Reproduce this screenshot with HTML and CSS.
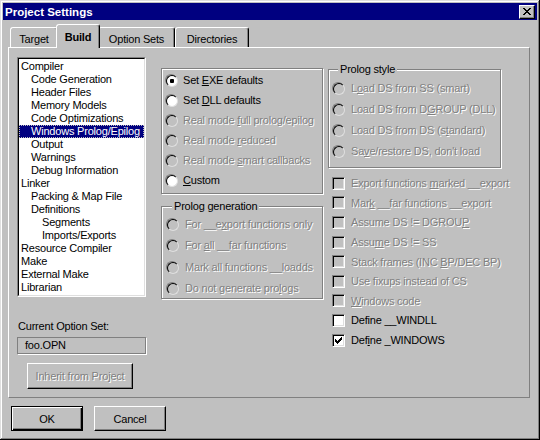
FILE: index.html
```html
<!DOCTYPE html>
<html>
<head>
<meta charset="utf-8">
<title>Project Settings</title>
<link rel="stylesheet" href="styles.css">
</head>
<body>
<div class="window">
  <div class="titlebar">
    <span class="title">Project Settings</span>
    <div class="close"><svg width="8" height="7" viewBox="0 0 8 7" shape-rendering="crispEdges"><path fill="#000" d="M0 0h2v1h-2z M6 0h2v1h-2z M1 1h2v1h-2z M5 1h2v1h-2z M2 2h4v1h-4z M3 3h2v1h-2z M2 4h4v1h-4z M1 5h2v1h-2z M5 5h2v1h-2z M0 6h2v1h-2z M6 6h2v1h-2z"/></svg></div>
  </div>
  <div class="client">
    <div class="tabs">
      <div class="tab t-target">Target</div>
      <div class="tab sel t-build">Build</div>
      <div class="tab t-opt">Option Sets</div>
      <div class="tab t-dir">Directories</div>
    </div>
    <div class="panel">
      <div class="col-left">
        <div class="listbox"><div class="listbox-in">
          <div class="item">Compiler</div>
          <div class="item l1">Code Generation</div>
          <div class="item l1">Header Files</div>
          <div class="item l1">Memory Models</div>
          <div class="item l1">Code Optimizations</div>
          <div class="item l1 selected">Windows Prolog/Epilog</div>
          <div class="item l1">Output</div>
          <div class="item l1">Warnings</div>
          <div class="item l1">Debug Information</div>
          <div class="item">Linker</div>
          <div class="item l1">Packing &amp; Map File</div>
          <div class="item l1">Definitions</div>
          <div class="item l2">Segments</div>
          <div class="item l2">Imports/Exports</div>
          <div class="item">Resource Compiler</div>
          <div class="item">Make</div>
          <div class="item">External Make</div>
          <div class="item">Librarian</div>
        </div></div>
        <div class="label">Current Option Set:</div>
        <div class="field">foo.OPN</div>
        <div class="btn inherit dis">Inherit from Project</div>
      </div>

      <div class="col-mid">
        <div class="group g1">
          <div class="opt"><span class="radio on"></span><span>Set <u>E</u>XE defaults</span></div>
          <div class="opt"><span class="radio"></span><span>Set <u>D</u>LL defaults</span></div>
          <div class="opt dis"><span class="radio"></span><span>Real mode <u>f</u>ull prolog/epilog</span></div>
          <div class="opt dis"><span class="radio"></span><span>Real mode <u>r</u>educed</span></div>
          <div class="opt dis"><span class="radio"></span><span>Real mode <u>s</u>mart callbacks</span></div>
          <div class="opt"><span class="radio"></span><span><u>C</u>ustom</span></div>
        </div>
        <div class="group g2">
          <span class="gtitle">Prolog generation</span>
          <div class="rows">
            <div class="opt dis"><span class="radio"></span><span>For __e<u>x</u>port functions only</span></div>
            <div class="opt dis"><span class="radio"></span><span>For <u>a</u>ll __far functions</span></div>
            <div class="opt dis"><span class="radio"></span><span>Mark all functions __loadds</span></div>
            <div class="opt dis"><span class="radio"></span><span>Do not generate pro<u>l</u>ogs</span></div>
          </div>
        </div>
      </div>

      <div class="col-right">
        <div class="group g3">
          <span class="gtitle">Prolog style</span>
          <div class="rows">
            <div class="opt dis"><span class="radio"></span><span>L<u>o</u>ad DS from SS (smart)</span></div>
            <div class="opt dis"><span class="radio"></span><span>Load DS from D<u>G</u>ROUP (DLL)</span></div>
            <div class="opt dis"><span class="radio"></span><span>Load DS from DS (s<u>t</u>andard)</span></div>
            <div class="opt dis"><span class="radio"></span><span>Sa<u>v</u>e/restore DS, don't load</span></div>
          </div>
        </div>
        <div class="checks">
          <div class="opt dis"><span class="check"></span><span>Export functions <u>m</u>arked __export</span></div>
          <div class="opt dis"><span class="check"></span><span>Mar<u>k</u> __far functions __export</span></div>
          <div class="opt dis"><span class="check"></span><span>Assume DS != DGROU<u>P</u></span></div>
          <div class="opt dis"><span class="check"></span><span>Assu<u>m</u>e DS != SS</span></div>
          <div class="opt dis"><span class="check"></span><span>Stack frames (INC <u>B</u>P/DEC BP)</span></div>
          <div class="opt dis"><span class="check"></span><span>Use fixups instead of CS</span></div>
          <div class="opt dis"><span class="check"></span><span><u>W</u>indows code</span></div>
          <div class="opt"><span class="check"></span><span>Define __WINDLL</span></div>
          <div class="opt"><span class="check"><svg width="7" height="7" viewBox="0 0 7 7" shape-rendering="crispEdges"><path fill="#000" d="M6 0h1v1h-1z M5 1h2v1h-2z M0 2h1v1h-1z M4 2h3v1h-3z M0 3h2v1h-2z M3 3h3v1h-3z M0 4h5v1h-5z M1 5h3v1h-3z M2 6h1v1h-1z"/></svg></span><span>Def<u>i</u>ne _WINDOWS</span></div>
        </div>
      </div>
    </div>
    <div class="buttons">
      <div class="btn default">OK</div>
      <div class="btn cancel">Cancel</div>
    </div>
  </div>
</div>
</body>
</html>
```

FILE: styles.css
```css
* { box-sizing: border-box; }
html, body { margin: 0; padding: 0; }
body {
  width: 540px;
  height: 440px;
  overflow: hidden;
  background: #c0c0c0;
  font-family: "Liberation Sans", Arial, sans-serif;
  font-size: 11px;
  letter-spacing: -0.2px;
  color: #000;
}
u { text-decoration: underline; text-underline-offset: 1px; }

.window {
  width: 540px;
  height: 440px;
  padding: 3px;
  background: #c0c0c0;
  box-shadow: inset -1px -1px #000, inset 1px 1px #dfdfdf, inset -2px -2px #808080, inset 2px 2px #fff;
  display: flex;
  flex-direction: column;
}

.titlebar {
  height: 17px;
  flex: none;
  background: #000080;
  display: flex;
  align-items: center;
  justify-content: space-between;
  padding: 0 2px 0 2px;
}
.title {
  color: #fff;
  font-weight: bold;
  font-size: 11.5px;
  letter-spacing: 0;
}
.close {
  width: 16px;
  height: 14px;
  background: #c0c0c0;
  border: 1px solid;
  border-color: #fff #000 #000 #fff;
  box-shadow: inset -1px -1px #808080;
  display: flex;
  align-items: center;
  justify-content: center;
  padding-right: 1px;
}
.close svg { display: block; }

.client {
  padding: 4px 0 0 5px;
  display: flex;
  flex-direction: column;
}

.tabs {
  height: 23px;
  margin-left: 2px;
  display: flex;
  align-items: flex-end;
  position: relative;
  z-index: 2;
}
.tab {
  height: 20px;
  background: #c0c0c0;
  border: 1px solid;
  border-bottom: 0;
  border-color: #fff #000 transparent #fff;
  border-radius: 3px 3px 0 0;
  box-shadow: inset -1px 0 #808080;
  display: flex;
  align-items: center;
  justify-content: center;
  padding-top: 2px;
}
.t-target { width: 48px; }
.t-build { width: 44px; }
.t-opt { width: 77px; }
.t-dir { width: 74px; }
.tab.sel {
  height: 24px;
  margin: 0 -2px -1px -2px;
  font-weight: bold;
  padding-top: 0;
  position: relative;
  z-index: 3;
}

.panel {
  width: 522px;
  height: 351px;
  border: 1px solid;
  border-color: #fff #808080 #808080 #fff;
  display: flex;
  padding: 9px 0 0 8px;
}

.col-left {
  width: 129px;
  margin-right: 15px;
  display: flex;
  flex-direction: column;
}
.listbox {
  height: 240px;
  border: 1px solid;
  border-color: #808080 #fff #fff #808080;
}
.listbox-in {
  height: 100%;
  border: 1px solid;
  border-color: #000 #dfdfdf #dfdfdf #000;
  background: #fff;
  padding-top: 1px;
  overflow: hidden;
}
.item {
  height: 13px;
  line-height: 13px;
  padding-left: 2px;
  white-space: nowrap;
}
.item.l1 { padding-left: 12px; }
.item.l2 { padding-left: 23px; }
.item.selected {
  background: #000080;
  color: #fff;
  outline: 1px dotted #c0c0c0;
  outline-offset: -1px;
}

.label {
  margin-top: 23px;
  line-height: 13px;
  padding-left: 1px;
}
.field {
  margin-top: 4px;
  height: 17px;
  border: 1px solid #808080;
  box-shadow: 1px 1px 0 #fff;
  padding-left: 7px;
  line-height: 15px;
}

.btn {
  background: #c0c0c0;
  border: 1px solid;
  border-color: #fff #000 #000 #fff;
  box-shadow: inset -1px -1px #808080;
  display: flex;
  align-items: center;
  justify-content: center;
}
.btn.dis { color: #808080; text-shadow: 1px 1px 0 #fff; }
.inherit {
  margin-top: 9px;
  margin-left: 10px;
  width: 106px;
  height: 26px;
}

.col-mid {
  width: 162px;
  margin-right: 5px;
  padding-top: 11px;
  display: flex;
  flex-direction: column;
}
.col-right {
  width: 173px;
  padding-top: 12px;
  display: flex;
  flex-direction: column;
}

.group {
  border: 1px solid #808080;
  box-shadow: inset 1px 1px 0 #fff, 1px 1px 0 #fff;
  display: flex;
  flex-direction: column;
}
.gtitle {
  align-self: flex-start;
  margin-top: -7px;
  margin-left: 6px;
  padding: 0 2px;
  line-height: 13px;
  background: #c0c0c0;
}
.g1 { height: 126px; padding: 1px 0 0 3px; }
.g1 .opt { height: 20px; }
.g2 { height: 93px; margin-top: 12px; padding-left: 4px; }
.g2 .rows { margin-top: 0.5px; }
.g2 .opt { height: 21.3px; gap: 7px; }
.g3 { height: 99px; padding-left: 3px; }
.g3 .rows { margin-top: 1.5px; }
.g3 .opt { height: 21px; gap: 7px; }

.checks {
  margin-top: 5.5px;
  padding-left: 4px;
}
.checks .opt { height: 19.6px; gap: 6px; }

.opt {
  display: flex;
  align-items: center;
  gap: 6px;
  white-space: nowrap;
}
.opt.dis { color: #808080; text-shadow: 1px 1px 0 #fff; }

.radio {
  width: 12px;
  height: 12px;
  flex: none;
  border-radius: 50%;
  border: 1px solid;
  border-color: #808080 #fff #fff #808080;
}
.radio::before {
  content: "";
  display: block;
  width: 10px;
  height: 10px;
  border-radius: 50%;
  border: 1px solid;
  border-color: #000 #dfdfdf #dfdfdf #000;
  background: #fff;
}
.opt.dis .radio::before { background: #c0c0c0; }
.radio.on::before { background: radial-gradient(circle at 50% 50%, #000 0, #000 2px, #fff 2.5px); }

.check {
  width: 13px;
  height: 13px;
  flex: none;
  border: 1px solid;
  border-color: #808080 #fff #fff #808080;
  box-shadow: inset 1px 1px #000, inset -1px -1px #dfdfdf;
  background: #fff;
  display: flex;
  align-items: center;
  justify-content: center;
  text-shadow: none;
}
.check svg { display: block; }
.opt.dis .check { background: #c0c0c0; }

.buttons {
  margin-top: 8px;
  padding-left: 3px;
  display: flex;
  gap: 11px;
}
.buttons .btn { width: 72px; height: 25px; }
.btn.default {
  border: 1px solid #000;
  box-shadow: inset 1px 1px #fff, inset -1px -1px #000, inset -2px -2px #808080;
}
```
